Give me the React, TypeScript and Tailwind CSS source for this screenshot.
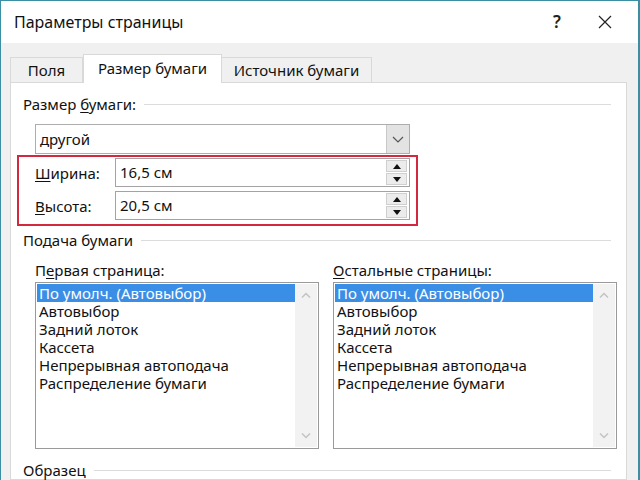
import React from "react";

const font = { fontFamily: '"Noto Sans", "Segoe UI", Arial, sans-serif' };

function U({ children }: { children: React.ReactNode }) {
  return <span className="underline underline-offset-2 decoration-1">{children}</span>;
}

function GroupHeader({ children }: { children: React.ReactNode }) {
  return (
    <div className="flex items-center h-[18px] pl-[12px] pr-[15px]">
      <span className="text-[15px] leading-[18px] text-[#111] whitespace-nowrap">{children}</span>
      <div className="flex-1 h-px bg-[#dcdcdc] ml-[8px]" />
    </div>
  );
}

function Spinner() {
  return (
    <div className="flex flex-col w-[21px] h-[25px] my-auto mr-[2px] gap-px">
      <div className="flex-1 bg-[#ececec] border border-[#cfcfcf] flex items-center justify-center">
        <svg width="8" height="5" viewBox="0 0 8 5"><path d="M0 5 L4 0 L8 5 Z" fill="#111" /></svg>
      </div>
      <div className="flex-1 bg-[#ececec] border border-[#cfcfcf] flex items-center justify-center">
        <svg width="8" height="5" viewBox="0 0 8 5"><path d="M0 0 L4 5 L8 0 Z" fill="#111" /></svg>
      </div>
    </div>
  );
}

function NumField({ label, value }: { label: React.ReactNode; value: string }) {
  return (
    <div className="flex items-center h-[29px]">
      <div className="w-[80px] text-[15px] leading-[18px] text-[#111]">{label}</div>
      <div className="flex w-[295px] h-[29px] border border-[#a3a3a3] bg-white">
        <div className="flex-1 pl-[4px] text-[15px] leading-[27px] text-[#111]">{value}</div>
        <Spinner />
      </div>
    </div>
  );
}

const items = [
  "По умолч. (Автовыбор)",
  "Автовыбор",
  "Задний лоток",
  "Кассета",
  "Непрерывная автоподача",
  "Распределение бумаги",
];

function ListBox() {
  return (
    <div className="flex h-[167px] w-full border border-[#9a9a9a] bg-white p-px">
      <div className="flex-1 flex flex-col">
        {items.map((t, i) => (
          <div
            key={t}
            className={
              "h-[18px] pl-[2px] text-[15px] leading-[18px] whitespace-nowrap " +
              (i === 0 ? "bg-[#3a8ee6] text-white" : "text-[#111]")
            }
          >
            {t}
          </div>
        ))}
      </div>
      <div className="w-[22px] bg-[#f2f2f2] flex flex-col justify-between items-center py-[8px]">
        <svg width="10" height="6" viewBox="0 0 10 6"><path d="M1 5.5 L5 1.5 L9 5.5" stroke="#c4c4c4" strokeWidth="1.5" fill="none" /></svg>
        <svg width="10" height="6" viewBox="0 0 10 6"><path d="M1 0.5 L5 4.5 L9 0.5" stroke="#c4c4c4" strokeWidth="1.5" fill="none" /></svg>
      </div>
    </div>
  );
}

export default function App() {
  return (
    <div
      className="w-[640px] h-[480px] overflow-hidden border-t border-l border-r-[2px] border-[#3b8fa3] bg-[#f0f0f0] flex flex-col"
      style={font}
    >
      {/* Title bar */}
      <div className="h-[42px] bg-white flex items-center shrink-0">
        <div className="pl-[13px] text-[16px] text-[#111] flex-1">Параметры страницы</div>
        <div className="w-[30px] text-[17px] text-[#222] text-center font-semibold">?</div>
        <div className="w-[18px]" />
        <div className="w-[30px] flex justify-center">
          <svg width="14" height="14" viewBox="0 0 14 14">
            <path d="M1 1 L13 13 M13 1 L1 13" stroke="#222" strokeWidth="1.2" />
          </svg>
        </div>
        <div className="w-[18px]" />
      </div>

      {/* Tabs */}
      <div className="flex items-end h-[28px] mt-[11px] pl-[9px] shrink-0">
        <div className="w-[73px] h-[25px] border border-b-0 border-[#d9d9d9] bg-[#f0f0f0] flex items-center justify-center text-[15px] text-[#111]">
          Поля
        </div>
        <div className="relative z-10 -mb-px w-[139px] h-[29px] border border-b-0 border-[#d9d9d9] bg-white flex items-center justify-center text-[15px] text-[#111] pb-[2px]">
          Размер бумаги
        </div>
        <div className="w-[150px] h-[25px] border border-b-0 border-l-0 border-[#d9d9d9] bg-[#f0f0f0] flex items-center justify-center text-[15px] text-[#111]">
          Источник бумаги
        </div>
      </div>

      {/* Panel */}
      <div className="ml-[9px] w-[617px] flex-1 border border-[#d9d9d9] bg-white flex flex-col">
        <div className="mt-[12px]">
          <GroupHeader>
            Размер <U>б</U>умаги:
          </GroupHeader>
        </div>

        <div className="pl-[24px]">
          <div className="mt-[11px] flex w-[375px] h-[30px] border border-[#adadad] bg-white">
            <div className="flex-1 pl-[4px] text-[15px] leading-[28px] text-[#111]">другой</div>
            <div className="w-[23px] bg-[#e3e3e3] border-l border-[#c8c8c8] flex items-center justify-center">
              <svg width="12" height="7" viewBox="0 0 12 7">
                <path d="M1 1 L6 6 L11 1" stroke="#555" strokeWidth="1.2" fill="none" />
              </svg>
            </div>
          </div>

          <div className="relative mt-[4px] flex flex-col gap-[4px]">
            <NumField label={<><U>Ш</U>ирина:</>} value="16,5 см" />
            <NumField label={<><U>В</U>ысота:</>} value="20,5 см" />
            <div className="absolute left-[-18px] top-[-3px] w-[401px] h-[71px] border-2 border-[#d3293e] pointer-events-none" />
          </div>
        </div>

        <div className="mt-[11px]">
          <GroupHeader>Подача бумаги</GroupHeader>
        </div>

        <div className="pl-[24px] mt-[12px] flex gap-[14px]">
          <div className="w-[284px] flex flex-col">
            <div className="h-[18px] text-[15px] leading-[18px] text-[#111]">
              П<U>е</U>рвая страница:
            </div>
            <div className="mt-[3px]">
              <ListBox />
            </div>
          </div>
          <div className="w-[284px] flex flex-col">
            <div className="h-[18px] text-[15px] leading-[18px] text-[#111]">
              <U>О</U>стальные страницы:
            </div>
            <div className="mt-[3px]">
              <ListBox />
            </div>
          </div>
        </div>

        <div className="mt-[12px]">
          <GroupHeader>Образец</GroupHeader>
        </div>
      </div>
    </div>
  );
}
